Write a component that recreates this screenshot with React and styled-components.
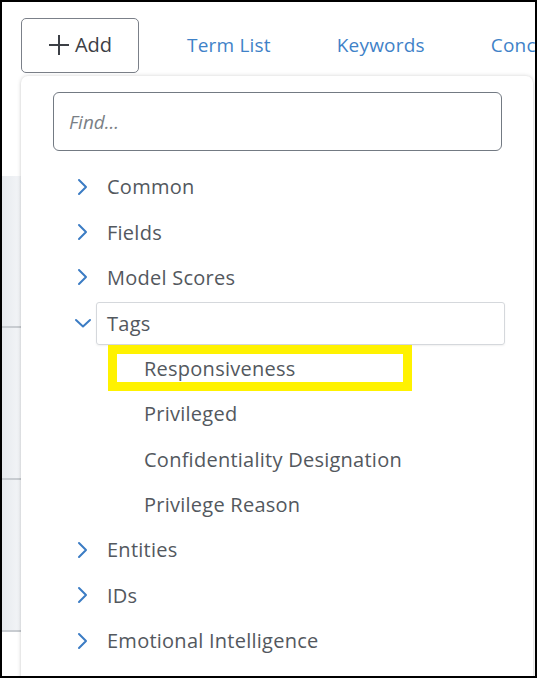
import React from 'react'
import styled, { createGlobalStyle } from 'styled-components'

const GlobalStyle = createGlobalStyle`
  html, body {
    margin: 0;
    padding: 0;
    background: #fff;
    font-family: "Open Sans", "Liberation Sans", sans-serif;
  }
`

const tree = [
  { label: 'Common' },
  { label: 'Fields' },
  { label: 'Model Scores' },
  {
    label: 'Tags',
    open: true,
    children: ['Responsiveness', 'Privileged', 'Confidentiality Designation', 'Privilege Reason'],
  },
  { label: 'Entities' },
  { label: 'IDs' },
  { label: 'Emotional Intelligence' },
]

const Chevron = ({ open }) => (
  <ChevronBox>
    <svg width="18" height="18" viewBox="0 0 18 18" fill="none">
      {open ? (
        <polyline points="2,6 9,12.5 16,6" stroke="#3b7cc4" strokeWidth="2" strokeLinecap="round" strokeLinejoin="round" />
      ) : (
        <polyline points="5,2 12,9 5,16" stroke="#3b7cc4" strokeWidth="2" strokeLinecap="round" strokeLinejoin="round" />
      )}
    </svg>
  </ChevronBox>
)

const App = () => {
  return (
    <>
      <GlobalStyle />
      <Frame>
        <Toolbar>
          <AddButton>
            <svg width="22" height="22" viewBox="0 0 22 22">
              <path d="M11 1v20M1 11h20" stroke="#3c4046" strokeWidth="2" />
            </svg>
            Add
          </AddButton>
          <TabLink>Term List</TabLink>
          <TabLink>Keywords</TabLink>
          <TabLink>Concepts</TabLink>
        </Toolbar>

        <Backdrop>
          <BackdropRow />
          <BackdropRow />
          <BackdropRow />
        </Backdrop>

        <Dropdown>
          <FindInput placeholder="Find..." />
          <TreeList>
            {tree.map((node) => (
              <React.Fragment key={node.label}>
                <TreeRow>
                  <Chevron open={node.open} />
                  <NodeLabel $open={node.open}>{node.label}</NodeLabel>
                </TreeRow>
                {node.open &&
                  node.children.map((child, i) => (
                    <ChildRow key={child}>
                      <ChildLabel $highlight={i === 0}>{child}</ChildLabel>
                    </ChildRow>
                  ))}
              </React.Fragment>
            ))}
          </TreeList>
        </Dropdown>
      </Frame>
    </>
  )
}

const Frame = styled.div`
  position: relative;
  width: 537px;
  height: 678px;
  box-sizing: border-box;
  border: 2px solid #000;
  background: #fff;
  overflow: hidden;
`

const Toolbar = styled.div`
  display: flex;
  align-items: center;
  padding: 16px 0 0 19px;
  white-space: nowrap;
`

const AddButton = styled.button`
  flex-shrink: 0;
  display: flex;
  align-items: center;
  justify-content: center;
  gap: 5px;
  width: 118px;
  height: 55px;
  box-sizing: border-box;
  border: 1px solid #7b8089;
  border-radius: 5px;
  background: #fff;
  color: #3c4046;
  font-family: "Open Sans", "Liberation Sans", sans-serif;
  font-size: 20px;
  padding: 0 0 2px 0;
  margin-right: 48px;
`

const TabLink = styled.span`
  flex-shrink: 0;
  color: #3f82c8;
  font-size: 19px;
  letter-spacing: 0.2px;
  margin-right: 66px;
  padding-bottom: 2px;
`

const Backdrop = styled.div`
  margin-top: 103px;
  width: 19px;
  display: flex;
  flex-direction: column;
`

const BackdropRow = styled.div`
  height: 150px;
  background: linear-gradient(to right, #e7eaee, #f3f5f8);
  border-bottom: 2px solid #c8ccd1;
`

const Dropdown = styled.div`
  position: absolute;
  left: 19px;
  top: 74px;
  right: 2px;
  bottom: -8px;
  background: #fff;
  border-radius: 7px;
  box-shadow: 0 0 4px rgba(0, 0, 0, 0.16), 0 1px 3px rgba(0, 0, 0, 0.08);
  padding: 16px 0 0 32px;
  box-sizing: border-box;
`

const FindInput = styled.input`
  display: block;
  width: 449px;
  height: 59px;
  box-sizing: border-box;
  border: 1px solid #737a83;
  border-radius: 6px;
  padding: 0 15px;
  font-family: "Open Sans", "Liberation Sans", sans-serif;
  font-size: 19px;
  outline: none;
  &::placeholder {
    color: #7a7f86;
    font-style: italic;
  }
`

const TreeList = styled.div`
  margin-top: 13px;
  display: flex;
  flex-direction: column;
`

const TreeRow = styled.div`
  display: flex;
  align-items: center;
  height: 45.4px;
  padding-left: 21px;
`

const ChevronBox = styled.span`
  display: flex;
  width: 18px;
  height: 18px;
  margin-right: 15px;
`

const NodeLabel = styled.span`
  display: flex;
  align-items: center;
  color: #53585e;
  font-size: 20px;
  letter-spacing: 0.25px;
  box-sizing: border-box;
  margin-left: ${(p) => (p.$open ? '-11px' : '0')};
  padding-left: ${(p) => (p.$open ? '10px' : '0')};
  width: ${(p) => (p.$open ? '409px' : 'auto')};
  height: ${(p) => (p.$open ? '43px' : 'auto')};
  margin-top: ${(p) => (p.$open ? '2px' : '0')};
  border: ${(p) => (p.$open ? '1px solid #d5d8dc' : 'none')};
  border-radius: 3px;
  box-shadow: ${(p) => (p.$open ? '0 1px 2px rgba(0,0,0,0.06)' : 'none')};
`

const ChildRow = styled.div`
  display: flex;
  align-items: center;
  height: 45.4px;
  padding-left: 55px;
`

const ChildLabel = styled.span`
  display: flex;
  align-items: center;
  box-sizing: border-box;
  width: 304px;
  height: 46px;
  padding-left: 27px;
  border: 9px solid ${(p) => (p.$highlight ? '#fff200' : 'transparent')};
  color: #53585e;
  font-size: 20px;
  letter-spacing: 0.25px;
  white-space: nowrap;
`

export default App
